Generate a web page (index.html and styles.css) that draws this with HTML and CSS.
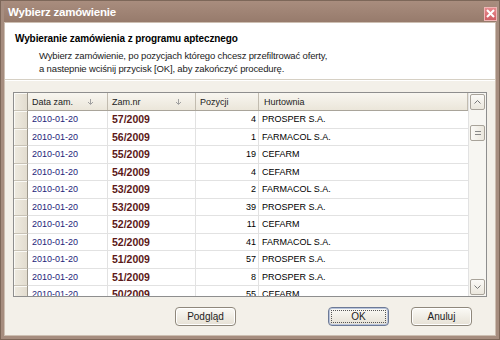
FILE: index.html
```html
<!DOCTYPE html>
<html lang="pl">
<head>
  <meta charset="UTF-8">
  <title>Wybierz zamówienie</title>
  <link rel="stylesheet" href="styles.css">
</head>
<body>

  <div class="window">
    <!-- Title bar -->
    <div class="titlebar">
      <span class="title">Wybierz zamówienie</span>
      <div class="close">
        <svg width="9" height="9" viewBox="0 0 9 9"><path d="M1 1 L8 8 M8 1 L1 8" stroke="#fff" stroke-width="2"/></svg>
      </div>
    </div>

    <div class="client">
      <!-- Intro -->
      <div class="intro">
        <h1>Wybieranie zamówienia z programu aptecznego</h1>
        <p>Wybierz zamówienie, po pozycjach którego chcesz przefiltrować oferty,<br>a nastepnie wciśnij przycisk [OK], aby zakończyć procedurę.</p>
      </div>

      <div class="content">
        <!-- Orders grid -->
        <div class="grid">
          <div class="grid-main">
            <div class="row head">
              <div class="sel"></div>
              <div class="cell c-date">Data zam.<svg class="sort" width="7" height="6" viewBox="0 0 7 6"><path d="M3.5 0 V5 M1 3 L3.5 5.5 L6 3" stroke="#a0a0a0" fill="none"/></svg></div>
              <div class="cell c-nr">Zam.nr<svg class="sort" width="7" height="6" viewBox="0 0 7 6"><path d="M3.5 0 V5 M1 3 L3.5 5.5 L6 3" stroke="#a0a0a0" fill="none"/></svg></div>
              <div class="cell c-poz">Pozycji</div>
              <div class="cell c-hurt">Hurtownia</div>
            </div>
            <div class="rows" id="rows"></div>
          </div>
          <div class="scrollbar">
            <div class="sb-btn">
              <svg width="7" height="4" viewBox="0 0 7 4"><path d="M0.5 3.5 L3.5 0.5 L6.5 3.5" stroke="#777" fill="none"/></svg>
            </div>
            <div class="sb-track">
              <div class="sb-thumb">
                <svg width="6" height="4" viewBox="0 0 6 4"><path d="M0 0.5 H6 M0 3.5 H6" stroke="#888"/></svg>
              </div>
            </div>
            <div class="sb-btn">
              <svg width="7" height="4" viewBox="0 0 7 4"><path d="M0.5 0.5 L3.5 3.5 L6.5 0.5" stroke="#777" fill="none"/></svg>
            </div>
          </div>
        </div>

        <!-- Buttons -->
        <div class="buttons">
          <button class="btn preview">Podgląd</button>
          <button class="btn default"><span>OK</span></button>
          <button class="btn">Anuluj</button>
        </div>
      </div>
    </div>
  </div>

  <script>
    const orders = [
      ["2010-01-20", "57/2009", 4, "PROSPER S.A."],
      ["2010-01-20", "56/2009", 1, "FARMACOL S.A."],
      ["2010-01-20", "55/2009", 19, "CEFARM"],
      ["2010-01-20", "54/2009", 4, "CEFARM"],
      ["2010-01-20", "53/2009", 2, "FARMACOL S.A."],
      ["2010-01-20", "53/2009", 39, "PROSPER S.A."],
      ["2010-01-20", "52/2009", 11, "CEFARM"],
      ["2010-01-20", "52/2009", 41, "FARMACOL S.A."],
      ["2010-01-20", "51/2009", 57, "PROSPER S.A."],
      ["2010-01-20", "51/2009", 8, "PROSPER S.A."],
      ["2010-01-20", "50/2009", 55, "CEFARM"]
    ];

    const rows = document.getElementById('rows');
    orders.forEach(o => {
      rows.innerHTML += `
        <div class="row">
          <div class="sel"></div>
          <div class="cell c-date">${o[0]}</div>
          <div class="cell c-nr">${o[1]}</div>
          <div class="cell c-poz">${o[2]}</div>
          <div class="cell c-hurt">${o[3]}</div>
        </div>`;
    });
  </script>
</body>
</html>
```

FILE: styles.css
```css
body {
  margin: 0;
  padding: 0;
  font-family: "Liberation Sans", Arial, sans-serif;
  font-size: 9.5px;
  color: #000;
  background: #fff;
}

.window {
  width: 500px;
  height: 340px;
  box-sizing: border-box;
  background: #a68d7f;
  border: 1px solid #7d6759;
  padding: 0 3px 3px 3px;
  display: flex;
  flex-direction: column;
}

.titlebar {
  height: 21px;
  display: flex;
  align-items: center;
  justify-content: space-between;
  background: linear-gradient(#a98d7e, #977b6c);
  padding: 0 0 0 4px;
}

.title {
  color: #fff;
  font-size: 11.5px;
  font-weight: bold;
  letter-spacing: -0.2px;
}

.close {
  width: 13px;
  height: 14px;
  margin-top: 4px;
  box-sizing: border-box;
  border: 1px solid #f0b6b6;
  background: linear-gradient(#e88b8f, #cf5e63);
  display: flex;
  align-items: center;
  justify-content: center;
  margin-right: -1px;
}

.client {
  flex: 1;
  display: flex;
  flex-direction: column;
  background: #f3f0e9;
  border: 1px solid #cdbfb2;
}

.intro {
  background: #fff;
  height: 56px;
  padding: 0 0 0 10px;
  border-bottom: 1px solid #d6d0c4;
  box-shadow: 0 1px 0 #fff;
}

.intro h1 {
  font-size: 10px;
  font-weight: bold;
  margin: 10px 0 0 0;
  letter-spacing: -0.1px;
}

.intro p {
  margin: 5px 0 0 24px;
  line-height: 13px;
  color: #222;
  letter-spacing: -0.15px;
}

.content {
  flex: 1;
  display: flex;
  flex-direction: column;
  padding: 12px 8px 0 8px;
}

.grid {
  height: 205px;
  box-sizing: border-box;
  border: 1px solid #8e8e8e;
  display: flex;
  background: #fff;
  overflow: hidden;
  font-size: 9px;
}

.grid-main {
  flex: 1;
  overflow: hidden;
}

.row {
  display: flex;
  height: 17.5px;
  border-bottom: 1px solid #e2e2e2;
  box-sizing: border-box;
}

.row.head {
  height: 18px;
  background: linear-gradient(#f8f6f0, #ebe6da);
  border-bottom: 1px solid #a9a49a;
}

.sel {
  width: 13px;
  flex: none;
  background: linear-gradient(90deg, #efebe1, #e2dccf);
  border-right: 1px solid #9d988d;
  box-shadow: inset 1px 1px 0 #fbfaf6;
}

.row .sel {
  border-bottom: 1px solid #c8c2b6;
  margin-bottom: -1px;
}

.cell {
  box-sizing: border-box;
  border-right: 1px solid #e2e2e2;
  padding: 0 4px;
  white-space: nowrap;
  overflow: hidden;
  display: flex;
  align-items: center;
}

.head .cell {
  border-right: 1px solid #c2bcb0;
  color: #222;
}

.sort {
  margin-left: auto;
  margin-right: 9px;
}

.c-date {
  width: 80px;
  color: #24247a;
}

.head .c-date { color: #222; }

.c-nr {
  width: 88px;
  color: #5c1818;
  font-weight: bold;
  font-size: 10.5px;
}

.head .c-nr {
  font-weight: normal;
  font-size: 9px;
  color: #222;
}

.c-poz {
  width: 63px;
  justify-content: flex-end;
  padding-right: 2px;
}

.head .c-poz { justify-content: flex-start; padding-left: 4px; }

.c-hurt {
  flex: 1;
  padding-left: 3px;
  border-right: none;
}

.head .c-hurt { padding-left: 5px; }

.scrollbar {
  width: 17px;
  flex: none;
  display: flex;
  flex-direction: column;
  background: #f7f6f2;
  border-left: 1px solid #e2e2e2;
}

.sb-btn {
  height: 16px;
  margin: 1px 1px;
  box-sizing: border-box;
  border: 1px solid #a8a39a;
  border-radius: 2px;
  background: linear-gradient(#fbfaf7, #ebe7dd);
  display: flex;
  align-items: center;
  justify-content: center;
}

.sb-track {
  flex: 1;
  padding-top: 14px;
}

.sb-thumb {
  height: 16px;
  margin: 0 1px;
  box-sizing: border-box;
  border: 1px solid #a8a39a;
  border-radius: 2px;
  background: linear-gradient(90deg, #fbfaf7, #ebe7dd);
  display: flex;
  align-items: center;
  justify-content: center;
}

.buttons {
  display: flex;
  justify-content: flex-end;
  gap: 22px;
  padding: 10px 15px 0 0;
}

.btn {
  width: 61px;
  height: 19px;
  padding: 0;
  font-family: "Liberation Sans", Arial, sans-serif;
  font-size: 10px;
  color: #222;
  border: 1px solid #8f887c;
  border-radius: 4px;
  background: linear-gradient(#fbfaf6, #e6e1d5);
  box-shadow: inset 0 0 0 1px #fff;
}

.btn.preview {
  margin-right: 70px;
}

.btn.default {
  border-color: #6d7a96;
  box-shadow: inset 0 0 0 1px #b8c4dc;
  padding: 2px;
}

.btn.default span {
  display: flex;
  align-items: center;
  justify-content: center;
  height: 100%;
  border: 1px dotted #555;
  box-sizing: border-box;
}
```
